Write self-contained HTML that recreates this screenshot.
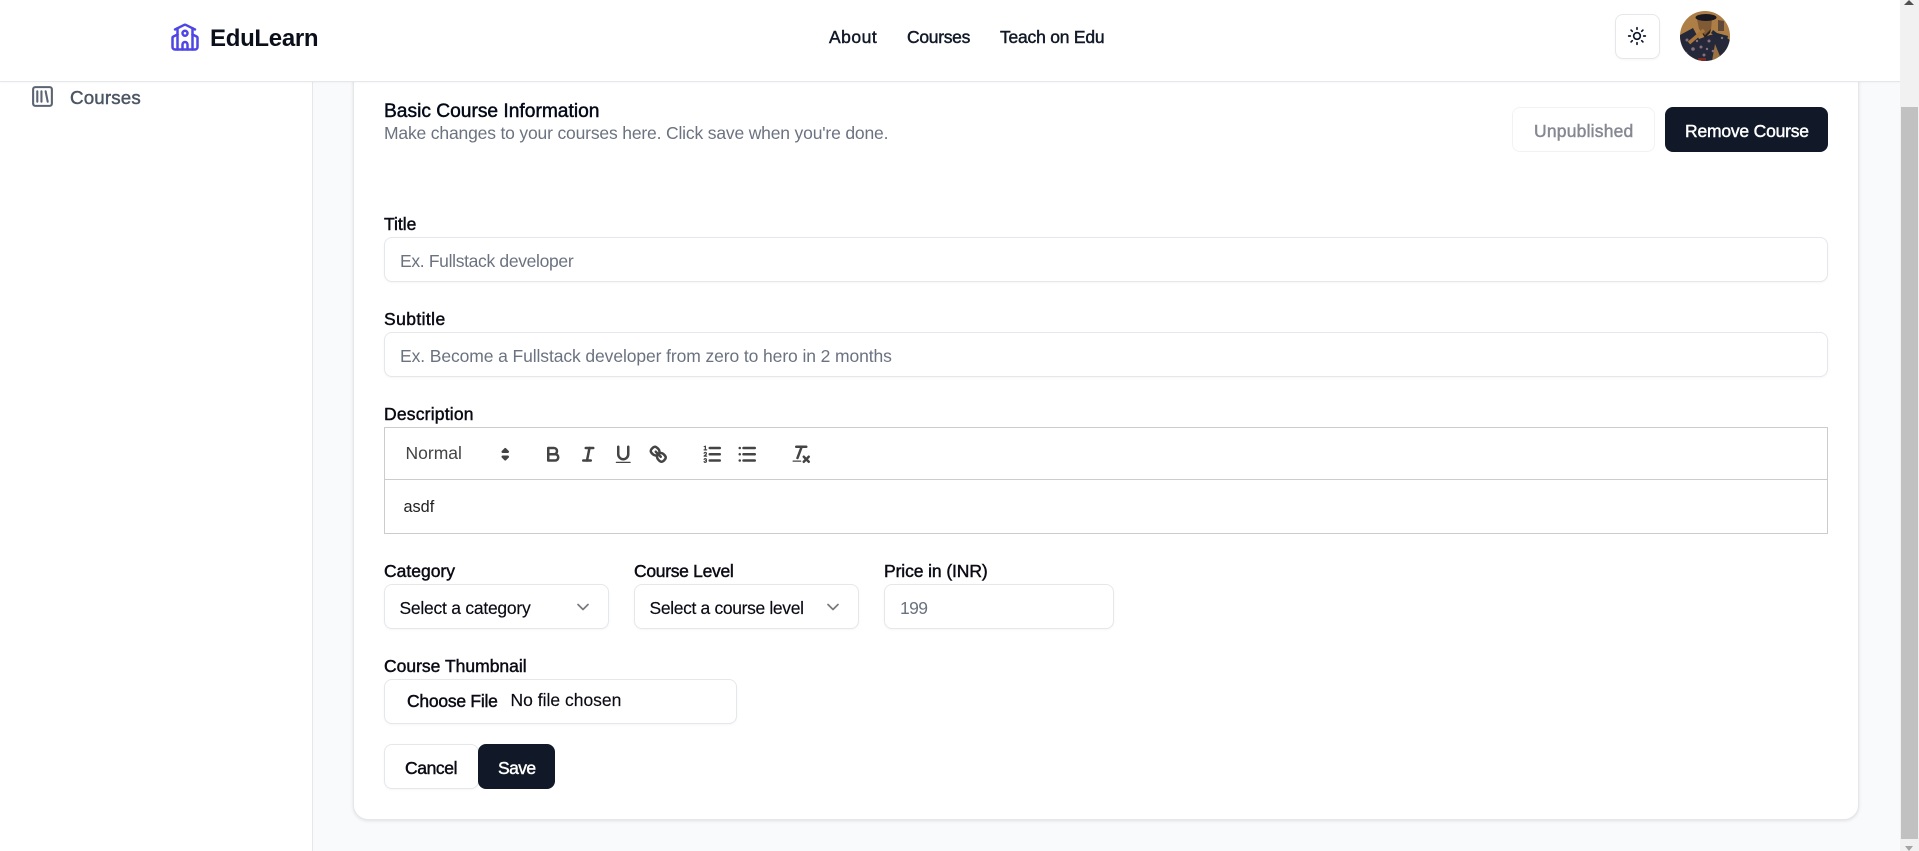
<!DOCTYPE html>
<html lang="en">
<head>
<meta charset="utf-8">
<title>EduLearn</title>
<style>
*{box-sizing:border-box;margin:0;padding:0}
html,body{width:1919px;height:851px;overflow:hidden;background:#f9fafb;font-family:"Liberation Sans",Arial,sans-serif;color:#0a0a14}
.a{position:absolute;white-space:nowrap}
.t{position:absolute;white-space:nowrap;font-size:17.5px;line-height:20px}
.m{-webkit-text-stroke:.45px currentColor}
.box{position:absolute;background:#fff;border:1.5px solid #e5e7eb;border-radius:8px;box-shadow:0 1px 2px rgba(0,0,0,.04)}
.ph{color:#6b7280}
svg{position:absolute;display:block;overflow:visible}
.lu{fill:none;stroke:currentColor;stroke-width:2;stroke-linecap:round;stroke-linejoin:round}
.q{fill:none;stroke:#444;stroke-width:2;stroke-linecap:round;stroke-linejoin:round}
.q .thin{stroke-width:1}
.q .f{fill:#444;stroke:none}
</style>
</head>
<body>

<!-- sidebar -->
<aside class="a" style="left:0;top:0;width:313px;height:851px;background:#fff;border-right:1.5px solid #e5e7eb"></aside>
<svg class="lu" style="left:30px;top:84px;color:#5b6472" width="25" height="25" viewBox="0 0 24 24"><rect width="18" height="18" x="3" y="3" rx="2"/><path d="M7 7v10"/><path d="M11 7v10"/><path d="m15 7 2 10"/></svg>
<div class="a m" style="left:70px;top:86.5px;font-size:18.75px;line-height:22px;letter-spacing:.15px;color:#4b5563">Courses</div>

<!-- card -->
<main class="a" style="left:353px;top:40px;width:1506px;height:780px;background:#fff;border:1.5px solid #e5e7eb;border-radius:15px;box-shadow:0 1px 3px rgba(0,0,0,.1)"></main>

<div class="t m" style="left:384px;top:101px;font-size:19.2px;line-height:22px;color:#020817">Basic Course Information</div>
<div class="t ph" style="left:384px;top:123px;letter-spacing:-.17px">Make changes to your courses here. Click save when you're done.</div>

<div class="box" style="left:1512px;top:107px;width:143px;height:45px;border-color:#f1f2f4;box-shadow:none"></div>
<div class="t m" style="left:1534px;top:121px;letter-spacing:.2px;color:#858893">Unpublished</div>
<div class="a" style="left:1665px;top:107px;width:163px;height:45px;background:#111827;border-radius:8px"></div>
<div class="t m" style="left:1685px;top:121px;letter-spacing:-.2px;color:#fff">Remove Course</div>

<div class="t m" style="left:384px;top:214px">Title</div>
<div class="box" style="left:384px;top:237px;width:1444px;height:45px"></div>
<div class="t ph" style="left:400px;top:251px;letter-spacing:-.33px">Ex. Fullstack developer</div>

<div class="t m" style="left:384px;top:309px;letter-spacing:.4px">Subtitle</div>
<div class="box" style="left:384px;top:332px;width:1444px;height:45px"></div>
<div class="t ph" style="left:400px;top:346px;letter-spacing:-.1px">Ex. Become a Fullstack developer from zero to hero in 2 months</div>

<div class="t m" style="left:384px;top:404px;letter-spacing:.2px">Description</div>
<div class="a" style="left:384px;top:427px;width:1444px;height:107px;border:1.25px solid #ccc;background:#fff"></div>
<div class="a" style="left:384px;top:479px;width:1444px;height:1.25px;background:#ccc"></div>
<div class="t" style="left:405.5px;top:443px;color:#444">Normal</div>
<svg class="q" style="left:493.75px;top:443px" width="22.5" height="22.5" viewBox="0 0 18 18"><polygon points="7 11 9 13 11 11 7 11"/><polygon points="7 7 9 5 11 7 7 7"/></svg>
<svg class="q" style="left:542px;top:442.5px" width="22.5" height="22.5" viewBox="0 0 18 18"><path d="M5,4H9.5A2.5,2.5,0,0,1,12,6.5v0A2.5,2.5,0,0,1,9.5,9H5A0,0,0,0,1,5,9V4A0,0,0,0,1,5,4Z"/><path d="M5,9h5.5A2.5,2.5,0,0,1,13,11.5v0A2.5,2.5,0,0,1,10.5,14H5a0,0,0,0,1,0,0V9A0,0,0,0,1,5,9Z"/></svg>
<svg class="q" style="left:577px;top:442.5px" width="22.5" height="22.5" viewBox="0 0 18 18"><line x1="7" x2="13" y1="4" y2="4"/><line x1="5" x2="11" y1="14" y2="14"/><line x1="8" x2="10" y1="14" y2="4"/></svg>
<svg class="q" style="left:612px;top:442.5px" width="22.5" height="22.5" viewBox="0 0 18 18"><path d="M5,3V9a4.012,4.012,0,0,0,4,4H9a4.012,4.012,0,0,0,4-4V3"/><rect class="f" height="1" rx="0.5" ry="0.5" width="12" x="3" y="15"/></svg>
<svg class="q" style="left:647px;top:442.5px" width="22.5" height="22.5" viewBox="0 0 18 18"><line x1="7" x2="11" y1="7" y2="11"/><path d="M8.9,4.577a3.476,3.476,0,0,1,.36,4.679A3.476,3.476,0,0,1,4.577,8.9C3.185,7.5,2.035,6.4,4.217,4.217S7.5,3.185,8.9,4.577Z"/><path d="M13.423,9.1a3.476,3.476,0,0,0-4.679-.36,3.476,3.476,0,0,0,.36,4.679c1.392,1.392,2.5,2.542,4.679.36S14.815,10.5,13.423,9.1Z"/></svg>
<svg class="q" style="left:701px;top:442.5px" width="22.5" height="22.5" viewBox="0 0 18 18"><line x1="7" x2="15" y1="4" y2="4"/><line x1="7" x2="15" y1="9" y2="9"/><line x1="7" x2="15" y1="14" y2="14"/><line class="thin" x1="2.5" x2="4.5" y1="5.5" y2="5.5"/><path class="f" d="M3.5,6A0.5,0.5,0,0,1,3,5.5V3.085l-0.276.138A0.5,0.5,0,0,1,2.053,3c-0.124-.247-0.023-0.324.224-0.447l1-.5A0.5,0.5,0,0,1,4,2.5v3A0.5,0.5,0,0,1,3.5,6Z"/><path class="thin" d="M4.5,10.5h-2c0-.234,1.85-1.076,1.85-2.234A0.959,0.959,0,0,0,2.5,8.156"/><path class="thin" d="M2.5,14.846a0.959,0.959,0,0,0,1.85-.109A0.7,0.7,0,0,0,3.75,14a0.688,0.688,0,0,0,.6-0.736,0.959,0.959,0,0,0-1.85-.109"/></svg>
<svg class="q" style="left:736px;top:442.5px" width="22.5" height="22.5" viewBox="0 0 18 18"><line x1="6" x2="15" y1="4" y2="4"/><line x1="6" x2="15" y1="9" y2="9"/><line x1="6" x2="15" y1="14" y2="14"/><line x1="3" x2="3" y1="4" y2="4"/><line x1="3" x2="3" y1="9" y2="9"/><line x1="3" x2="3" y1="14" y2="14"/></svg>
<svg class="q" style="left:790px;top:442.5px" width="22.5" height="22.5" viewBox="0 0 18 18"><line x1="5" x2="13" y1="3" y2="3"/><line x1="6" x2="9.35" y1="12" y2="3"/><line x1="11" x2="15" y1="11" y2="15"/><line x1="15" x2="11" y1="11" y2="15"/><rect class="f" height="1" rx="0.5" ry="0.5" width="7" x="2" y="14"/></svg>
<div class="a" style="left:403.5px;top:497.5px;font-size:16.25px;line-height:18px;color:#222">asdf</div>

<div class="t m" style="left:384px;top:561px">Category</div>
<div class="box" style="left:384px;top:584px;width:225px;height:45px"></div>
<div class="t" style="left:399.500px;top:598px;letter-spacing:-.25px;-webkit-text-stroke:.15px currentColor">Select a category</div>
<svg class="lu" style="left:572.5px;top:597px;opacity:.55" width="20" height="20" viewBox="0 0 24 24"><path d="m6 9 6 6 6-6"/></svg>

<div class="t m" style="left:634px;top:561px;letter-spacing:-.3px">Course Level</div>
<div class="box" style="left:634px;top:584px;width:225px;height:45px"></div>
<div class="t" style="left:649.500px;top:598px;letter-spacing:-.35px;-webkit-text-stroke:.15px currentColor">Select a course level</div>
<svg class="lu" style="left:823px;top:597px;opacity:.55" width="20" height="20" viewBox="0 0 24 24"><path d="m6 9 6 6 6-6"/></svg>

<div class="t m" style="left:884px;top:561px;letter-spacing:-.1px">Price in (INR)</div>
<div class="box" style="left:884px;top:584px;width:230px;height:45px"></div>
<div class="t ph" style="left:900px;top:598px;letter-spacing:-.6px">199</div>

<div class="t m" style="left:384px;top:656px">Course Thumbnail</div>
<div class="box" style="left:384px;top:679px;width:353px;height:45px"></div>
<div class="t m" style="left:407px;top:691px;letter-spacing:-.25px">Choose File</div>
<div class="t" style="left:510.500px;top:690px;-webkit-text-stroke:.15px currentColor">No file chosen</div>

<div class="box" style="left:384px;top:744px;width:95px;height:45px"></div>
<div class="t m" style="left:405px;top:758px;letter-spacing:-.4px">Cancel</div>
<div class="a" style="left:478px;top:744px;width:77px;height:45px;background:#111827;border-radius:8px"></div>
<div class="t m" style="left:498px;top:758px;letter-spacing:-.6px;color:#fff">Save</div>

<!-- header -->
<header class="a" style="left:0;top:0;width:1900px;height:82px;background:#fff;border-bottom:1.5px solid #e5e7eb;box-shadow:0 1px 2px rgba(0,0,0,.03)"></header>
<svg class="lu" style="left:170px;top:21.5px;color:#4f46e5" width="30" height="30" viewBox="0 0 24 24"><path d="M14 22v-4a2 2 0 1 0-4 0v4"/><path d="m18 10 3.447 1.724a1 1 0 0 1 .553.894V20a2 2 0 0 1-2 2H4a2 2 0 0 1-2-2v-7.382a1 1 0 0 1 .553-.894L6 10"/><path d="M18 5v17"/><path d="m4 6 7.106-3.553a2 2 0 0 1 1.788 0L20 6"/><path d="M6 5v17"/><circle cx="12" cy="9" r="2"/></svg>
<div class="a" style="left:210px;top:25px;font-size:24px;line-height:28px;font-weight:700;letter-spacing:-.3px;color:#0b0f1a">EduLearn</div>
<div class="t m" style="left:829px;top:27px;letter-spacing:.5px;color:#111827">About</div>
<div class="t m" style="left:907px;top:27px;letter-spacing:-.3px;color:#111827">Courses</div>
<div class="t m" style="left:1000px;top:27px;letter-spacing:-.22px;color:#111827">Teach on Edu</div>

<div class="box" style="left:1615px;top:14px;width:45px;height:45px"></div>
<svg class="lu" style="left:1627px;top:26px;color:#0f172a" width="20" height="20" viewBox="0 0 24 24"><circle cx="12" cy="12" r="4"/><path d="M12 2v2"/><path d="M12 20v2"/><path d="m4.93 4.93 1.41 1.41"/><path d="m17.66 17.66 1.41 1.41"/><path d="M2 12h2"/><path d="M20 12h2"/><path d="m6.34 17.66-1.41 1.41"/><path d="m19.07 4.93-1.41 1.41"/></svg>

<!-- avatar -->
<svg style="left:1680px;top:11px" width="50" height="50" viewBox="0 0 50 50">
<defs><clipPath id="c"><circle cx="25" cy="25" r="25"/></clipPath></defs>
<g clip-path="url(#c)">
<rect width="50" height="50" fill="#ad7f46"/>
<path d="M0 24 13 17 19 28 30 24 41 23 50 29V50H0Z" fill="#242838"/>
<path d="M35 33 42 50H32Z" fill="#9c7340"/>
<path d="M17 8H32L31 19 25 24 19 18Z" fill="#7f5a35"/>
<path d="M20 19 25 24 31 18 30 22 25 27Z" fill="#2a2022"/>
<ellipse cx="26" cy="6.500" rx="10.500" ry="3.500" fill="#191820"/>
<path d="M9 32 16 26 24 19" fill="none" stroke="#a8763a" stroke-width="3.500"/>
<path d="M38 9 44 10 44 20 38 20Z" fill="#5f4a3a"/>
<path d="M33 19 37 22 48 25 47 29 36 27 31 22Z" fill="#232838"/>
<g fill="#86707f"><circle cx="7" cy="29" r="1.500"/><circle cx="13" cy="38" r="1.800"/><circle cx="21" cy="36" r="1.500"/><circle cx="29" cy="30" r="1.500"/><circle cx="24" cy="44" r="1.500"/><circle cx="6" cy="42" r="1.300"/><circle cx="33" cy="40" r="1.300"/><circle cx="17" cy="30" r="1.200"/><circle cx="27" cy="38" r="1.200"/><circle cx="42" cy="27" r="1.200"/></g>
<rect x="18" y="47" width="8" height="3" fill="#7d2a22"/>
</g>
</svg>

<!-- scrollbar -->
<div class="a" style="left:1900px;top:0;width:19px;height:851px;background:#f1f1f1"></div>
<div class="a" style="left:1901px;top:107px;width:17px;height:732px;background:#c1c1c1"></div>
<div class="a" style="left:1904px;top:0;width:0;height:0;border-left:5.500px solid transparent;border-right:5.500px solid transparent;border-bottom:5px solid #505050"></div>
<div class="a" style="left:1905px;top:846px;width:0;height:0;border-left:4.500px solid transparent;border-right:4.500px solid transparent;border-top:5px solid #a3a3a3"></div>

</body>
</html>
